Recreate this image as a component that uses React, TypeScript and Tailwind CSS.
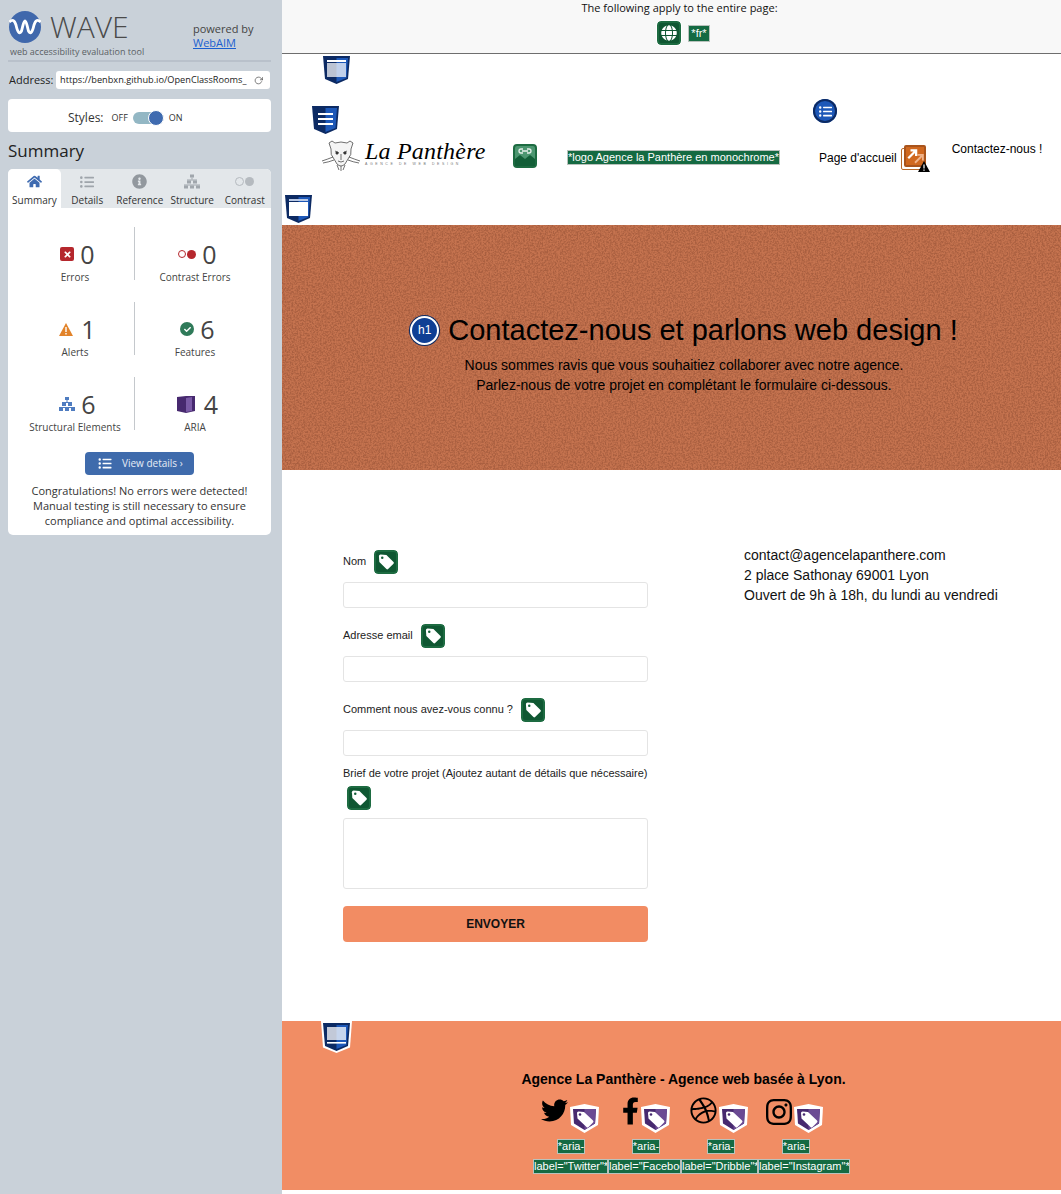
import { FaHome, FaInfoCircle, FaListUl, FaTwitter, FaFacebookF, FaDribbble, FaInstagram, FaGlobe, FaCheck, FaTimes } from "react-icons/fa";
import { FiRotateCw } from "react-icons/fi";
import { ReactNode } from "react";

const sans = "font-['Open_Sans',sans-serif]";
const helv = "font-['Liberation_Sans',Arial,sans-serif]";

function TagGlyph() {
  return (
    <svg viewBox="0 0 24 24" className="h-full w-full">
      <path d="M3.5 5 Q3.5 3 5.5 3 L12.5 3.5 L21 12 Q22 13 21 14 L14.5 20.5 Q13.5 21.5 12.5 20.5 L4 12 Z" fill="#fff" />
      <circle cx="7.5" cy="7" r="1.5" fill="#135f38" />
    </svg>
  );
}

function GreenTag() {
  return (
    <span className="inline-block h-6 w-6 shrink-0 rounded-[4px] border-[2px] border-[#1d6b41] bg-[#0f5732] outline outline-1 outline-white">
      <TagGlyph />
    </span>
  );
}

function Shield({ children, className, outlined }: { children: ReactNode; className: string; outlined?: boolean }) {
  return (
    <svg viewBox={outlined ? "-2 -2 31 32" : "0 0 27 28"} className={className}>
      {outlined && <path d="M-2 -2 H29 L27 24.5 L13.5 30 L0 24.5 Z" fill="#fff" />}
      <path d="M0 0 H27 L25 23 L13.5 28 L2 23 Z" fill="#0c2a63" />
      <path d="M13.5 2 H25 L23.5 22 L13.5 26 Z" fill="#1d58b8" />
      {children}
    </svg>
  );
}

function PurpleTag() {
  return (
    <svg viewBox="0 0 29 29" className="h-[29px] w-[29px] shrink-0">
      <path d="M0 3 L14.5 0 L29 3 L28 21 L14.5 29 L1 21 Z" fill="#fff" />
      <path d="M3 5 H26 L25 19.5 L14.5 26 L4 19.5 Z" fill="#47296f" />
      <path d="M14.5 5 H26 L25 19.5 L14.5 26 Z" fill="#6b4a93" />
      <path d="M7 9 Q7 7.5 8.5 7.5 L14 8 L23 16.5 Q24 17.5 23 18.5 L18.5 23 Q17.5 24 16.5 23 L7.5 14.5 Z" fill="#fff" />
      <circle cx="10" cy="10.5" r="1.3" fill="#47296f" />
    </svg>
  );
}

function Pyramid({ className }: { className: string }) {
  return (
    <svg viewBox="0 0 16 14" className={className} fill="currentColor">
      <rect x="6" y="0" width="4" height="3" />
      <rect x="7.5" y="3" width="1" height="2" />
      <rect x="3" y="5" width="10" height="1" />
      <rect x="3" y="6" width="4" height="3" />
      <rect x="9" y="6" width="4" height="3" />
      <rect x="0" y="10" width="16" height="1" />
      <rect x="0" y="11" width="4" height="3" />
      <rect x="6" y="11" width="4" height="3" />
      <rect x="12" y="11" width="4" height="3" />
    </svg>
  );
}

function Flag({ children, className = "" }: { children: ReactNode; className?: string }) {
  return (
    <span className={`border border-[#b9c2bc] bg-[#156a42] text-white whitespace-nowrap ${className}`}>{children}</span>
  );
}

function Stat({ icon, value, label }: { icon: ReactNode; value: number; label: string }) {
  return (
    <div className="flex h-[53px] flex-col items-center">
      <div className="ml-[5px] mt-[15px] flex h-[24px] items-center gap-[6px]">
        {icon}
        <span className={`${sans} text-[25px] font-normal leading-none text-[#444]`}>{value}</span>
      </div>
      <span className={`${sans} mt-[6px] whitespace-nowrap text-[10px] leading-[10px] text-[#444]`}>{label}</span>
    </div>
  );
}

function Tab({ icon, label, active }: { icon: ReactNode; label: string; active?: boolean }) {
  return (
    <div className={`flex h-[39px] flex-col items-center justify-start pt-[5px] ${active ? "w-[53px] rounded-t-[5px] bg-white" : "flex-1"}`}>
      <div className="flex h-[15px] items-center">{icon}</div>
      <span className={`${sans} mt-[4px] whitespace-nowrap text-[10px] leading-[14px] text-[#333]`}>{label}</span>
    </div>
  );
}

function Sidebar() {
  return (
    <aside className={`${sans} flex w-[282px] shrink-0 flex-col bg-[#c9d1d9] px-2 pt-[11px]`}>
      <div className="flex h-[51px] w-[263px] border-b-2 border-[#b9c1cb]">
        <div className="w-[185px]">
          <div className="flex h-[32px] items-center pl-[1px]">
            <svg viewBox="0 0 32 32" className="h-[32px] w-[32px]">
              <circle cx="16" cy="16" r="16" fill="#4068ac" />
              <path d="M0.5 11 C3 8 5.5 9 7 14 C8.5 21 10.5 24 12.5 20 C14 15 14.5 10 16 10 C17.5 10 18 15 19.5 20 C21.5 24 23.5 21 25 14 C26.5 9 29 8 31.5 11" fill="none" stroke="#fff" strokeWidth="2.8" />
            </svg>
            <span className="ml-[9px] text-[30px] font-light leading-none text-[#4a4a4a]">WAVE</span>
          </div>
          <div className="mt-[3px] pl-[2px] text-[9px] leading-[12px] text-[#5a5f64]">web accessibility evaluation tool</div>
        </div>
        <div className="pt-[11px] text-[11px] leading-[14px] text-[#444]">
          <div>powered by</div>
          <div className="text-[#1a5fd0] underline">WebAIM</div>
        </div>
      </div>
      <div className="mt-[9px] flex h-[18px] items-center">
        <span className="w-[48px] pl-[1px] text-[11px] text-[#222]">Address:</span>
        <div className="flex h-[18px] w-[214px] items-center justify-between rounded-[3px] bg-white pl-1 pr-[7px]">
          <span className="text-[9.2px] text-[#222]">https://benbxn.github.io/OpenClassRooms_</span>
          <FiRotateCw className="h-[9px] w-[9px] shrink-0 text-[#555]" />
        </div>
      </div>
      <div className="mt-[10px] flex h-[33px] w-[263px] items-center rounded-[4px] bg-white pl-[60px] pt-[5px]">
        <span className="text-[12px] text-[#333]">Styles:</span>
        <span className="ml-2 text-[9px] text-[#333]">OFF</span>
        <span className="relative ml-[5px] h-[12px] w-[31px] rounded-full bg-[#93b7c4]">
          <span className="absolute right-0 top-[-2px] h-[16px] w-[16px] rounded-full border border-white bg-[#3f6bb0]" />
        </span>
        <span className="ml-[5px] text-[9px] text-[#333]">ON</span>
      </div>
      <h2 className="mt-[7px] text-[17px] leading-[24px] text-[#222]">Summary</h2>
      <div className="mt-[6px] w-[263px] rounded-[5px] bg-white">
        <div className="flex h-[39px] rounded-t-[5px] bg-[#e3e7ea]">
          <Tab active label="Summary" icon={<FaHome className="h-[15px] w-[15px] text-[#3f6bb0]" />} />
          <Tab label="Details" icon={<FaListUl className="h-[14px] w-[14px] text-[#9fa5ab]" />} />
          <Tab label="Reference" icon={<FaInfoCircle className="h-[15px] w-[15px] text-[#92989e]" />} />
          <Tab label="Structure" icon={<Pyramid className="h-[15px] w-[16px] text-[#a0a6ac]" />} />
          <Tab
            label="Contrast"
            icon={
              <span className="flex gap-[1px]">
                <span className="h-[9px] w-[9px] rounded-full border border-[#b5babf]" />
                <span className="h-[9px] w-[9px] rounded-full bg-[#b5babf]" />
              </span>
            }
          />
        </div>
        <div className="grid grid-cols-[127px_1fr] gap-y-[22px] pt-[19px]">
          <div className="border-r border-[#c4c8cc] pl-[8px]">
            <Stat
              value={0}
              label="Errors"
              icon={
                <span className="flex h-[14px] w-[14px] items-center justify-center rounded-[2px] bg-[#b5272d]">
                  <FaTimes className="h-[9px] w-[9px] text-white" />
                </span>
              }
            />
          </div>
          <div className="pr-[16px]">
            <Stat
              value={0}
              label="Contrast Errors"
              icon={
                <span className="flex items-center gap-[1px]">
                  <span className="h-[8px] w-[8px] rounded-full border border-[#b5272d]" />
                  <span className="h-[9px] w-[9px] rounded-full bg-[#b5272d]" />
                </span>
              }
            />
          </div>
          <div className="border-r border-[#c4c8cc] pl-[8px]">
            <Stat
              value={1}
              label="Alerts"
              icon={
                <svg viewBox="0 0 14 13" className="mr-[2px] h-[13px] w-[14px]">
                  <path d="M7 0 L14 13 H0 Z" fill="#e2832a" />
                  <rect x="6.3" y="4" width="1.4" height="5" fill="#fff" />
                  <rect x="6.3" y="10" width="1.4" height="1.5" fill="#fff" />
                </svg>
              }
            />
          </div>
          <div className="pr-[16px]">
            <Stat
              value={6}
              label="Features"
              icon={
                <span className="flex h-[14px] w-[14px] items-center justify-center rounded-full bg-[#2f7a59]">
                  <FaCheck className="h-[7px] w-[7px] text-white" />
                </span>
              }
            />
          </div>
          <div className="border-r border-[#c4c8cc] pl-[8px]">
            <Stat value={6} label="Structural Elements" icon={<Pyramid className="h-[14px] w-[16px] text-[#4f7cc0]" />} />
          </div>
          <div className="pr-[16px]">
            <Stat
              value={4}
              label="ARIA"
              icon={
                <svg viewBox="0 0 18 17" className="mr-[3px] h-[17px] w-[18px]">
                  <path d="M0 1 L9 0 H18 V15 L9 17 L0 15 Z" fill="#47296f" />
                  <path d="M9 2 L15 1 V15 L9 16 Z" fill="#7a5aa6" />
                </svg>
              }
            />
          </div>
        </div>
        <div className="mt-[22px] flex justify-center">
          <div className="flex h-[23px] w-[109px] items-center rounded-[4px] bg-[#3f6bac] pl-[13px]">
            <FaListUl className="h-[13px] w-[14px] text-white" />
            <span className="ml-[10px] text-[10px] text-[#e6ecf5]">View details ›</span>
          </div>
        </div>
        <p className="px-3 pb-[7px] pt-[8px] text-center text-[11px] leading-[15px] text-[#333]">
          Congratulations! No errors were detected! Manual testing is still necessary to ensure compliance and optimal accessibility.
        </p>
      </div>
    </aside>
  );
}

function Panther() {
  return (
    <svg viewBox="0 0 38 31" className="h-[31px] w-[38px]" fill="none" stroke="#333" strokeWidth="0.7">
      <path d="M7 3 L10 1 L13 3 Q19 1 25 3 L28 1 L31 3 L29 9 Q30 15 26 19 L23 24 Q19 28 15 24 L12 19 Q8 15 9 9 Z" fill="#f4f4f4" />
      <path d="M13 11 L17 13 M25 11 L21 13 M19 14 V20 M16 21 Q19 23 22 21 M15 25 L17 30 M23 25 L21 30 M19 26 V31" />
      <path d="M0 21 Q6 19 11 17 M1 23 Q7 22 12 20 M38 21 Q32 19 27 17 M37 23 Q31 22 26 20" />
      <circle cx="15" cy="13" r="1.2" fill="#333" />
      <circle cx="23" cy="13" r="1.2" fill="#333" />
    </svg>
  );
}

function Header() {
  return (
    <header className="relative h-[171px] bg-white">
      <Shield className="absolute left-[41px] top-[2px] h-[28px] w-[27px]">
        <rect x="4" y="4" width="19" height="2" fill="#fff" />
        <rect x="4" y="7" width="19" height="14" fill="#fff" opacity="0.72" />
      </Shield>
      <Shield className="absolute left-[30px] top-[52px] h-[28px] w-[27px]">
        <rect x="6" y="7" width="15" height="2" fill="#fff" />
        <rect x="6" y="12" width="15" height="2" fill="#fff" />
        <rect x="6" y="17" width="15" height="2" fill="#fff" />
      </Shield>
      <span className="absolute left-[531px] top-[45px] flex h-6 w-6 items-center justify-center rounded-full bg-[#1d58b8] ring-2 ring-inset ring-[#0c2a63]">
        <FaListUl className="h-[13px] w-[13px] text-white" />
      </span>
      <div className={`${helv} flex h-full items-start pl-[40px] pt-[86px] text-[12px] text-black`}>
        <Panther />
        <div className="ml-[5px] w-[122px]">
          <div className="whitespace-nowrap font-['Liberation_Serif',serif] text-[24px] italic leading-[22px] tracking-[0.2px]">La Panthère</div>
          <div className="whitespace-nowrap text-[3.5px] leading-[4px] tracking-[2.6px] text-[#777]">AGENCE DE WEB DESIGN</div>
        </div>
        <div className="ml-[26px] mt-[4px] h-6 w-6 rounded-[4px] border-[2px] border-[#1d6b41] bg-[#4c9670]">
          <svg viewBox="0 0 20 20" className="h-full w-full">
            <path d="M0 20 V13 L5 9 L10 13 L15 9 L20 13 V20 Z" fill="#135f38" />
            <path d="M8 3 H6 Q4 3 4 5 Q4 7 6 7 H8 M12 3 H14 Q16 3 16 5 Q16 7 14 7 H12 M7 5 H13" fill="none" stroke="#e6f0ea" strokeWidth="1.3" />
          </svg>
        </div>
        <Flag className="ml-[30px] mt-[10px] h-[15px] text-[11px] leading-[13px]">*logo Agence la Panthère en monochrome*</Flag>
        <span className="ml-[39px] mt-[9px]">Page d'accueil</span>
        <span className="relative ml-[4px] mt-[5px] h-[26px] w-[26px]">
          <span className="absolute left-0 top-[3px] h-[22px] w-[22px] rounded-[2px] border border-[#b96a2a]" />
          <span className="absolute left-[3px] top-0 flex h-[22px] w-[22px] items-center justify-center rounded-[2px] border-[2px] border-[#a9541c] bg-[#d0681f]">
            <svg viewBox="0 0 16 16" className="h-full w-full">
              <path d="M2 10 L8 4 M4 3 H9 V8" fill="none" stroke="#fff" strokeWidth="2" />
              <path d="M8 14 L14 8 M10 7 H15 V12" fill="none" stroke="#f0b48c" strokeWidth="1.6" />
            </svg>
          </span>
          <svg viewBox="0 0 12 11" className="absolute bottom-[-1px] right-[-3px] h-[11px] w-[12px]">
            <path d="M6 0 L12 11 H0 Z" fill="#000" />
            <rect x="5.4" y="3.5" width="1.2" height="4" fill="#fff" />
            <rect x="5.4" y="8.5" width="1.2" height="1.3" fill="#fff" />
          </svg>
        </span>
        <span className="ml-[25px] mt-0">Contactez-nous !</span>
      </div>
      <Shield className="absolute left-[3px] top-[141px] h-[28px] w-[27px]">
        <rect x="4" y="4" width="19" height="2" fill="#b9c9e6" />
        <rect x="4" y="7" width="19" height="14" fill="#fff" />
      </Shield>
    </header>
  );
}

function Hero() {
  return (
    <section className="relative flex h-[245px] flex-col items-center overflow-hidden bg-[#c5734f] pl-[25px] pt-[87px] text-black">
      <svg className="absolute inset-0 h-full w-full opacity-25">
        <filter id="grain" colorInterpolationFilters="sRGB">
          <feTurbulence type="fractalNoise" baseFrequency="0.6" numOctaves="3" seed="4" />
          <feColorMatrix values="0 0 0 0 0.35 0 0 0 0 0.15 0 0 0 0 0.08 3 0 0 0 -1.1" />
        </filter>
        <rect width="100%" height="100%" filter="url(#grain)" />
      </svg>
      <div className={`${helv} relative flex items-center`}>
        <span className="flex h-[29px] w-[29px] items-center justify-center rounded-full border-[2px] border-white bg-[#0f3f94] text-[12px] text-white ring-1 ring-[#0c2a63]">h1</span>
        <h1 className="ml-[9px] text-[29px] font-normal leading-[36px]">Contactez-nous et parlons web design !</h1>
      </div>
      <p className={`${helv} relative mt-[7px] text-center text-[14px] leading-[20px]`}>
        Nous sommes ravis que vous souhaitiez collaborer avec notre agence.
        <br />
        Parlez-nous de votre projet en complétant le formulaire ci-dessous.
      </p>
    </section>
  );
}

function Field({ label, wrap }: { label: string; wrap?: boolean }) {
  return (
    <div className="flex flex-col">
      {wrap ? (
        <>
          <span className="mt-[-5px] h-[12px] whitespace-nowrap text-[11px] leading-[12px] text-[#222]">{label}</span>
          <span className="ml-[4px] mt-[7px] block h-6"><GreenTag /></span>
        </>
      ) : (
        <div className="flex h-6 items-center gap-[8px] text-[11px] text-[#222]">
          <span className="mb-[2px]">{label}</span>
          <GreenTag />
        </div>
      )}
      <div className={`mt-2 rounded-[3px] border border-[#e4e4e4] bg-white ${wrap ? "h-[71px]" : "h-[26px]"}`} />
    </div>
  );
}

function ContactSection() {
  return (
    <section className={`${helv} flex h-[551px] bg-white pl-[61px] pt-[80px]`}>
      <div className="flex w-[305px] flex-col gap-4">
        <Field label="Nom" />
        <Field label="Adresse email" />
        <Field label="Comment nous avez-vous connu ?" />
        <Field wrap label="Brief de votre projet (Ajoutez autant de détails que nécessaire)" />
        <div className="mt-[1px] flex h-[36px] items-center justify-center rounded-[4px] bg-[#f28c63] text-[12px] font-bold text-[#111]">ENVOYER</div>
      </div>
      <div className="ml-[96px] mt-[-5px] text-[14px] leading-[20px] text-[#111]">
        <div>contact@agencelapanthere.com</div>
        <div>2 place Sathonay 69001 Lyon</div>
        <div>Ouvert de 9h à 18h, du lundi au vendredi</div>
      </div>
    </section>
  );
}

function Footer() {
  const socials = [
    { icon: <FaTwitter className="h-[27px] w-[27px]" />, shift: "ml-[8px]" },
    { icon: <FaFacebookF className="h-[28px] w-[17px]" />, shift: "ml-[14px]" },
    { icon: <FaDribbble className="h-[27px] w-[27px]" />, shift: "ml-[7px]" },
    { icon: <FaInstagram className="h-[30px] w-[26px]" />, shift: "ml-[8px]" },
  ];
  const labels = [
    { text: 'label="Twitter"*', w: "w-[75px]" },
    { text: 'label="Facebook"*', w: "w-[73px]" },
    { text: 'label="Dribble"*', w: "w-[77px]" },
    { text: 'label="Instagram"*', w: "w-[92px]" },
  ];
  return (
    <footer className={`${helv} relative h-[169px] bg-[#f18d64] pt-[49px] text-black`}>
      <Shield outlined className="absolute left-[39px] top-0 h-[32px] w-[31px]">
        <rect x="4" y="4" width="19" height="13" fill="#fff" opacity="0.75" />
        <rect x="4" y="19" width="19" height="1.6" fill="#fff" />
      </Shield>
      <p className="pl-[24px] text-center text-[14px] font-bold leading-[18px]">Agence La Panthère - Agence web basée à Lyon.</p>
      <div className="ml-[251px] mt-[9px] flex h-[37px] w-[300px]">
        {socials.map((s, i) => (
          <div key={i} className="flex w-[75px] items-start">
            <span className={s.shift}>{s.icon}</span>
            <span className="ml-[2px] mt-[7px]"><PurpleTag /></span>
          </div>
        ))}
      </div>
      <div className="ml-[251px] mt-[5px] flex w-[300px] text-[11px] leading-[13px]">
        {[0, 1, 2, 3].map((i) => (
          <div key={i} className="flex w-[75px] justify-center">
            <Flag className="ml-[1px] h-[15px]">*aria-</Flag>
          </div>
        ))}
      </div>
      <div className="ml-[251px] mt-[5px] flex text-[11px] leading-[13px]">
        {labels.map((l) => (
          <span key={l.text} className={`${l.w} h-[15px] overflow-hidden border border-[#b9c2bc] bg-[#156a42] text-white whitespace-nowrap`}>{l.text}</span>
        ))}
      </div>
    </footer>
  );
}

export default function App() {
  return (
    <div className="flex h-[1194px] w-[1061px] overflow-hidden bg-white">
      <Sidebar />
      <main className="flex w-[779px] flex-col">
        <div className={`${sans} flex h-[54px] flex-col items-center border-b border-[#6e6e6e] bg-[#f8f8f8] pl-4 pt-[1px]`}>
          <span className="text-[11px] leading-[14px] text-[#111]">The following apply to the entire page:</span>
          <div className="ml-[8px] mt-[6px] flex items-center gap-[7px]">
            <span className="flex h-6 w-6 items-center justify-center rounded-[4px] border-[2px] border-[#1d6b41] bg-[#0f5732] outline outline-1 outline-white">
              <FaGlobe className="h-[16px] w-[16px] text-white" />
            </span>
            <Flag className={`${helv} h-[17px] w-[22px] text-center text-[11px] leading-[15px]`}>*fr*</Flag>
          </div>
        </div>
        <Header />
        <Hero />
        <ContactSection />
        <Footer />
      </main>
    </div>
  );
}
